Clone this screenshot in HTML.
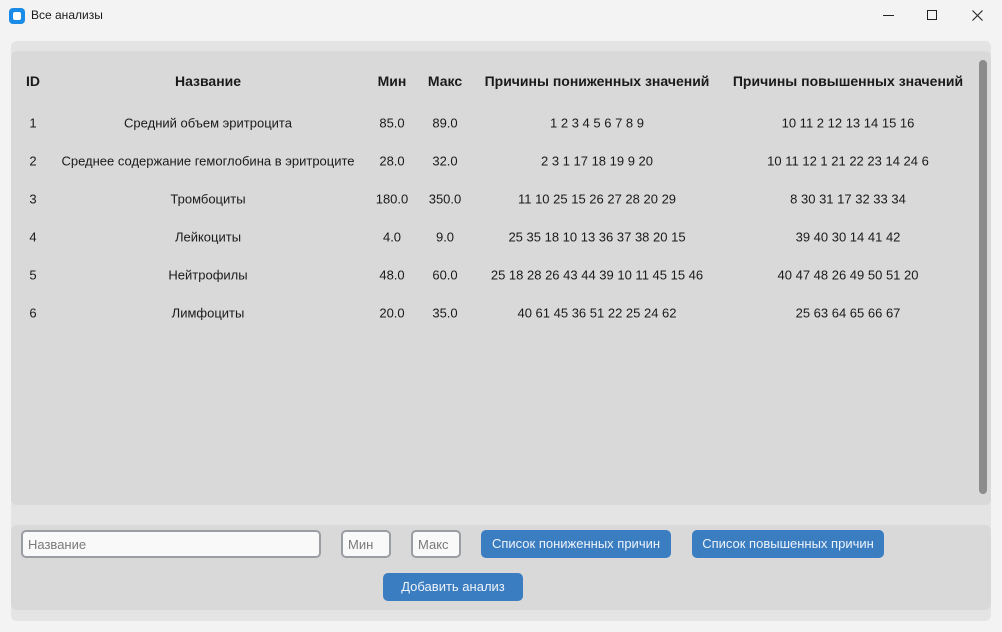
<!DOCTYPE html>
<html><head><meta charset="utf-8"><style>
*{margin:0;padding:0;box-sizing:border-box}
body{width:1002px;height:632px;background:#f3f3f3;font-family:"Liberation Sans",sans-serif;position:relative;overflow:hidden;color:#1a1a1a}
.abs{position:absolute}
.t{position:absolute;transform:translate(-50%,-50%);white-space:nowrap;font-size:13px}
.h{font-weight:bold;font-size:14px}
.inp{position:absolute;background:#f9f9f9;border:2px solid #9a9ea3;border-radius:5px;font-size:13px;color:#7a7a7a;padding:5px 0 0 5px}
.btn{position:absolute;background:#3b7dc1;border-radius:5px;color:#eef3fa;font-size:13px;text-align:center;line-height:28px}
</style></head><body>
<div class="abs" style="left:0;top:0;width:1002px;height:32px;background:#f3f3f3"></div>
<div class="abs" style="left:9px;top:8px;width:16px;height:16px;border-radius:4px;background:#1a8be6"></div>
<div class="abs" style="left:13px;top:12px;width:8px;height:8px;border-radius:2px;background:#fff"></div>
<div class="abs" style="left:31px;top:8px;font-size:12px">Все анализы</div>
<div class="abs" style="left:883px;top:15px;width:11px;height:1px;background:#222"></div>
<div class="abs" style="left:927px;top:10px;width:10px;height:10px;border:1px solid #222"></div>
<svg class="abs" style="left:972px;top:10px" width="11" height="11"><path d="M0.5 0.5L10.5 10.5M10.5 0.5L0.5 10.5" stroke="#222" stroke-width="1.1"/></svg>
<div class="abs" style="left:11px;top:41px;width:980px;height:580px;background:#e4e4e4;border-radius:6px"></div>
<div class="abs" style="left:11px;top:51px;width:980px;height:454px;background:#d9d9d9;border-radius:6px"></div>
<div class="abs" style="left:979px;top:60px;width:8px;height:434px;background:#8c8c8c;border-radius:4px"></div>
<div class="abs" style="left:11px;top:525px;width:980px;height:85px;background:#d9d9d9;border-radius:6px"></div>

<div class="t h" style="left:33px;top:81px">ID</div>
<div class="t h" style="left:208px;top:81px">Название</div>
<div class="t h" style="left:392px;top:81px">Мин</div>
<div class="t h" style="left:445px;top:81px">Макс</div>
<div class="t h" style="left:597px;top:81px">Причины пониженных значений</div>
<div class="t h" style="left:848px;top:81px">Причины повышенных значений</div>

<div class="t" style="left:33px;top:123px">1</div><div class="t" style="left:208px;top:123px">Средний объем эритроцита</div><div class="t" style="left:392px;top:123px">85.0</div><div class="t" style="left:445px;top:123px">89.0</div><div class="t" style="left:597px;top:123px">1 2 3 4 5 6 7 8 9</div><div class="t" style="left:848px;top:123px">10 11 2 12 13 14 15 16</div>
<div class="t" style="left:33px;top:161px">2</div><div class="t" style="left:208px;top:161px">Среднее содержание гемоглобина в эритроците</div><div class="t" style="left:392px;top:161px">28.0</div><div class="t" style="left:445px;top:161px">32.0</div><div class="t" style="left:597px;top:161px">2 3 1 17 18 19 9 20</div><div class="t" style="left:848px;top:161px">10 11 12 1 21 22 23 14 24 6</div>
<div class="t" style="left:33px;top:199px">3</div><div class="t" style="left:208px;top:199px">Тромбоциты</div><div class="t" style="left:392px;top:199px">180.0</div><div class="t" style="left:445px;top:199px">350.0</div><div class="t" style="left:597px;top:199px">11 10 25 15 26 27 28 20 29</div><div class="t" style="left:848px;top:199px">8 30 31 17 32 33 34</div>
<div class="t" style="left:33px;top:237px">4</div><div class="t" style="left:208px;top:237px">Лейкоциты</div><div class="t" style="left:392px;top:237px">4.0</div><div class="t" style="left:445px;top:237px">9.0</div><div class="t" style="left:597px;top:237px">25 35 18 10 13 36 37 38 20 15</div><div class="t" style="left:848px;top:237px">39 40 30 14 41 42</div>
<div class="t" style="left:33px;top:275px">5</div><div class="t" style="left:208px;top:275px">Нейтрофилы</div><div class="t" style="left:392px;top:275px">48.0</div><div class="t" style="left:445px;top:275px">60.0</div><div class="t" style="left:597px;top:275px">25 18 28 26 43 44 39 10 11 45 15 46</div><div class="t" style="left:848px;top:275px">40 47 48 26 49 50 51 20</div>
<div class="t" style="left:33px;top:313px">6</div><div class="t" style="left:208px;top:313px">Лимфоциты</div><div class="t" style="left:392px;top:313px">20.0</div><div class="t" style="left:445px;top:313px">35.0</div><div class="t" style="left:597px;top:313px">40 61 45 36 51 22 25 24 62</div><div class="t" style="left:848px;top:313px">25 63 64 65 66 67</div>

<div class="inp" style="left:21px;top:530px;width:300px;height:28px">Название</div>
<div class="inp" style="left:341px;top:530px;width:50px;height:28px">Мин</div>
<div class="inp" style="left:411px;top:530px;width:50px;height:28px">Макс</div>
<div class="btn" style="left:481px;top:530px;width:190px;height:28px">Список пониженных причин</div>
<div class="btn" style="left:692px;top:530px;width:192px;height:28px">Список повышенных причин</div>
<div class="btn" style="left:383px;top:573px;width:140px;height:28px">Добавить анализ</div>
</body></html>
